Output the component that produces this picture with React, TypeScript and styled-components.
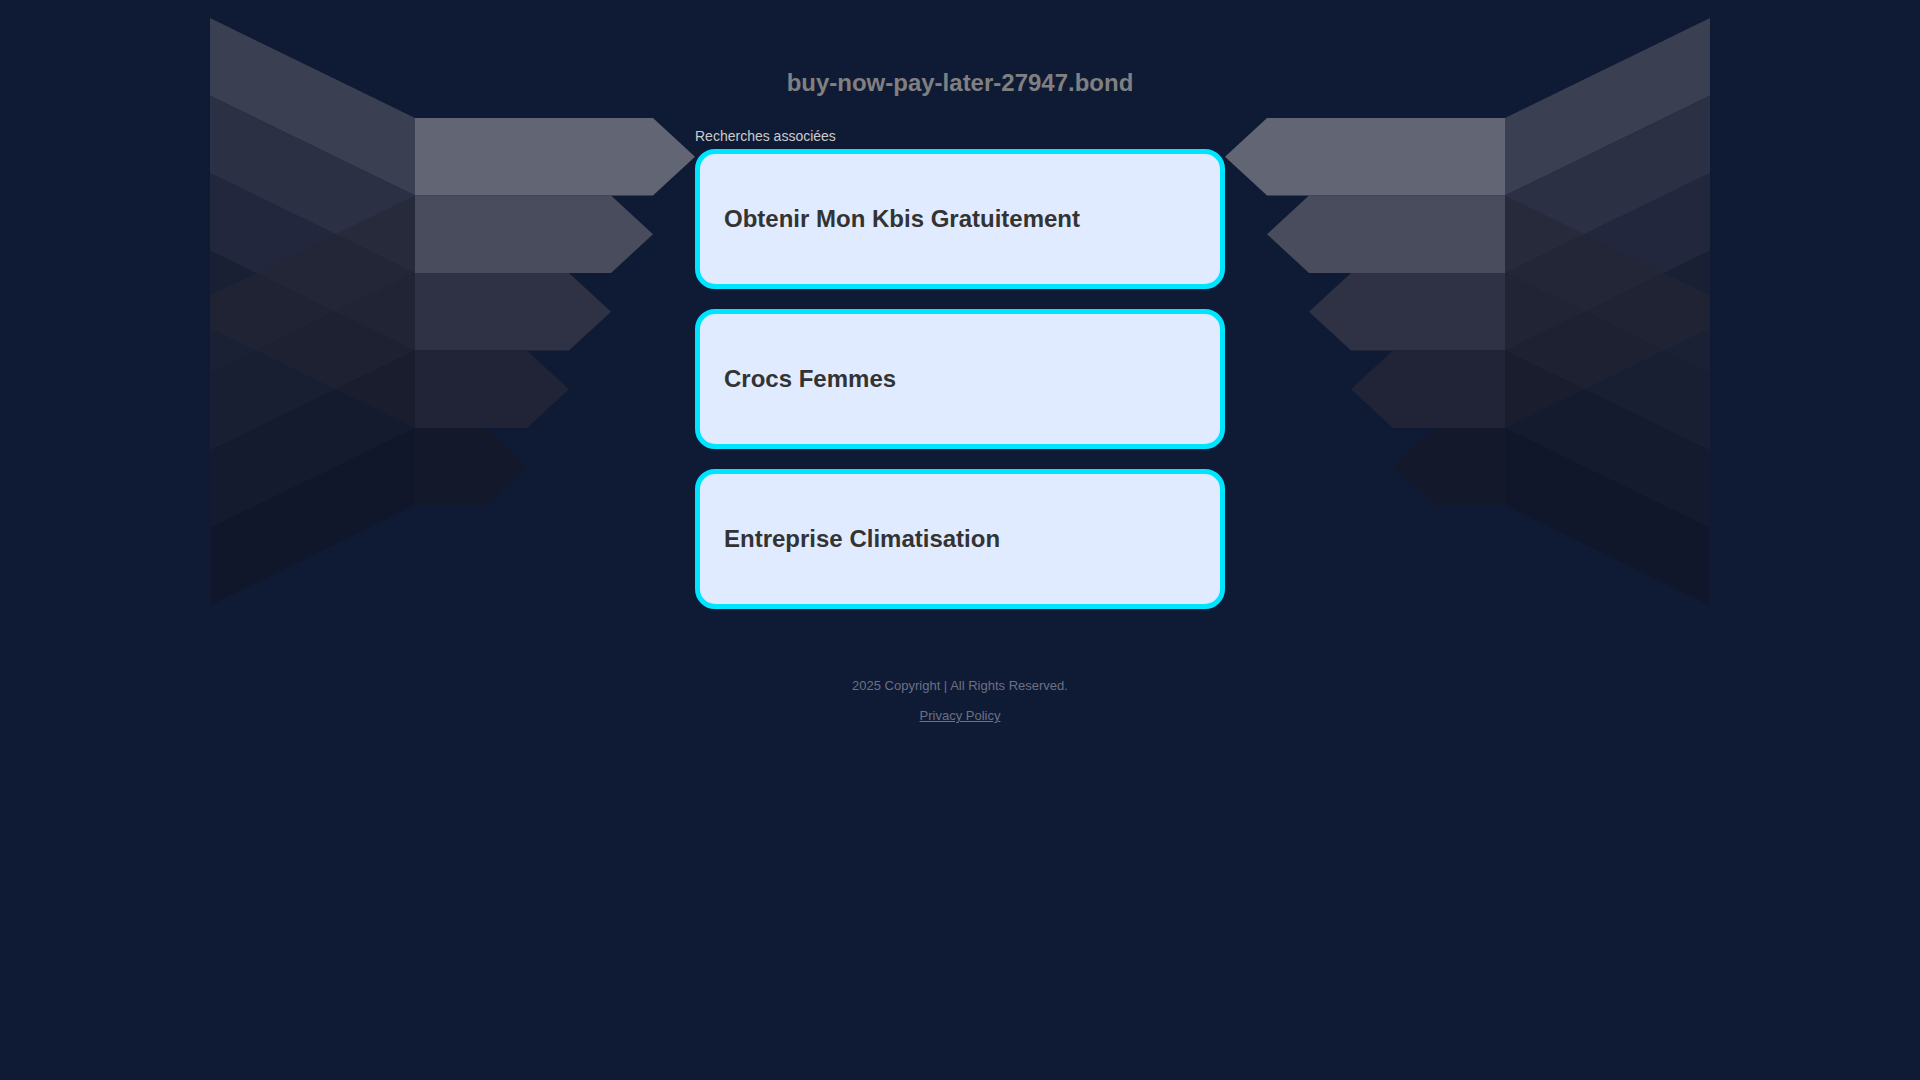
import React from 'react';
import styled, { createGlobalStyle } from 'styled-components';

const GlobalStyle = createGlobalStyle`
  html, body {
    margin: 0;
    padding: 0;
    background: #0f1b35;
  }
  body {
    font-family: "Liberation Sans", Arial, sans-serif;
  }
`;

const Page = styled.div`
  position: relative;
  min-height: 1080px;
  overflow: hidden;
`;

const Wings = styled.svg`
  position: absolute;
  top: 0;
  left: 50%;
  width: 1920px;
  height: 640px;
  transform: translateX(-50%);
  pointer-events: none;
`;

const Content = styled.main`
  position: relative;
  width: 530px;
  margin: 0 auto;
  padding-top: 68px;
  display: flex;
  flex-direction: column;
`;

const Domain = styled.h1`
  margin: 0;
  font-size: 24px;
  line-height: 29px;
  font-weight: 700;
  color: #808080;
  text-align: center;
`;

const RelatedLabel = styled.div`
  margin-top: 31px;
  font-size: 14px;
  line-height: 16px;
  color: #cccccc;
`;

const CardList = styled.div`
  margin-top: 5px;
  display: flex;
  flex-direction: column;
  gap: 20px;
`;

const Card = styled.a`
  box-sizing: border-box;
  height: 140px;
  display: flex;
  align-items: center;
  padding: 0 24px;
  border: 5px solid #00e5ff;
  border-radius: 20px;
  background: #e0ebff;
  color: #333333;
  font-size: 24px;
  font-weight: 700;
  text-decoration: none;
`;

const Footer = styled.footer`
  margin-top: 69px;
  display: flex;
  flex-direction: column;
  align-items: center;
  gap: 14px;
  font-size: 13px;
  line-height: 16px;
  color: #6b7084;
`;

const PolicyLink = styled.a`
  color: #6b7084;
  text-decoration: underline;
`;

// wing geometry (left wing, page coordinates); right wing is mirrored
const X0 = 210;
const X1 = 415;
const TOP = 118;
const H = 77.5;
const SLANT = 100;

const arrowColors = ['#626573', '#494c5c', '#2e3244', '#202436', '#14182b'];
const downColors: (string | null)[] = ['#585966', '#3e404e', '#2e3142', '#222534', null];
const upColors: (string | null)[] = [null, '#232634', '#202331', '#191c29', '#131625'];

const Wing = () => {
  const rows = [0, 1, 2, 3, 4];
  return (
    <g>
      {rows.map((i) => {
        const y = TOP + H * i;
        const c = downColors[i];
        if (!c) return null;
        return (
          <polygon
            key={`d${i}`}
            points={`${X0},${y - SLANT} ${X1},${y} ${X1},${y + H} ${X0},${y - SLANT + H}`}
            fill={c}
            fillOpacity={0.6}
          />
        );
      })}
      {rows.map((i) => {
        const y = TOP + H * i;
        const c = upColors[i];
        if (!c) return null;
        return (
          <polygon
            key={`u${i}`}
            points={`${X0},${y + SLANT} ${X1},${y} ${X1},${y + H} ${X0},${y + SLANT + H}`}
            fill={c}
            fillOpacity={0.6}
          />
        );
      })}
      {rows.map((i) => {
        const y = TOP + H * i;
        const end = 653 - 42 * i;
        const tip = end + 42;
        return (
          <polygon
            key={`a${i}`}
            points={`${X1},${y} ${end},${y} ${tip},${y + H / 2} ${end},${y + H} ${X1},${y + H}`}
            fill={arrowColors[i]}
          />
        );
      })}
    </g>
  );
};

const searches = ['Obtenir Mon Kbis Gratuitement', 'Crocs Femmes', 'Entreprise Climatisation'];

const App: React.FunctionComponent = () => {
  return (
    <Page>
      <GlobalStyle />
      <Wings viewBox="0 0 1920 640">
        <Wing />
        <g transform="translate(1920,0) scale(-1,1)">
          <Wing />
        </g>
      </Wings>
      <Content>
        <Domain>buy-now-pay-later-27947.bond</Domain>
        <RelatedLabel>Recherches associées</RelatedLabel>
        <CardList>
          {searches.map((s) => (
            <Card key={s} href="#">
              {s}
            </Card>
          ))}
        </CardList>
        <Footer>
          <span>2025 Copyright | All Rights Reserved.</span>
          <PolicyLink href="#">Privacy Policy</PolicyLink>
        </Footer>
      </Content>
    </Page>
  );
};

export default App;
